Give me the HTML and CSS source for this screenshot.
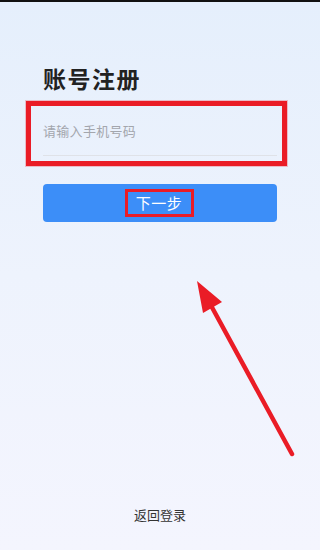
FILE: index.html
```html
<!DOCTYPE html>
<html lang="zh">
<head>
<meta charset="utf-8">
<link rel="stylesheet" href="styles.css">
</head>
<body>
<div class="screen">
  <div class="content">
    <h1 class="title">账号注册</h1>
    <div class="mark-box">
      <div class="field">
        <span class="placeholder">请输入手机号码</span>
      </div>
    </div>
    <div class="btn"><span class="btn-label">下一步</span></div>
  </div>
  <svg class="arrow" width="320" height="550" viewBox="0 0 320 550">
    <line x1="292" y1="454" x2="208" y2="300" stroke="#ea1c26" stroke-width="4.5" stroke-linecap="round"/>
    <polygon points="197,281 203,313 222,302" fill="#ea1c26"/>
  </svg>
  <div class="footer">返回登录</div>
</div>
</body>
</html>
```
FILE: styles.css
```css
html, body {
  margin: 0;
  padding: 0;
}
body {
  font-family: "Noto Sans CJK SC", "Noto Sans", sans-serif;
  width: 320px;
  height: 550px;
  overflow: hidden;
}
.screen {
  position: relative;
  width: 320px;
  height: 550px;
  box-sizing: border-box;
  border-top: 2px solid #111;
  background: linear-gradient(180deg, #e5effc 0%, #eef3fd 50%, #f4f5fe 100%);
  display: flex;
  flex-direction: column;
}
.content {
  padding: 0 33px 0 26px;
  display: flex;
  flex-direction: column;
}
.title {
  margin: 60px 0 0 17px;
  font-size: 23px;
  line-height: 32px;
  font-weight: 700;
  color: #222;
  letter-spacing: 1.5px;
}
.mark-box {
  margin-top: 7px;
  height: 65px;
  box-sizing: border-box;
  border: 5px solid #ea1c26;
  box-shadow: 0 0 0 1px rgba(234, 28, 38, 0.25);
  padding: 0 5px 0 12px;
}
.field {
  height: 50px;
  box-sizing: border-box;
  border-bottom: 1px solid #dfe2e8;
  display: flex;
  align-items: center;
  padding-top: 0px;
}
.placeholder {
  font-size: 13px;
  color: #a3a6ad;
  letter-spacing: 0.3px;
}
.btn {
  margin: 18px 0 0 17px;
  width: 234px;
  height: 38px;
  border-radius: 4px;
  background: #3c8ef8;
  display: flex;
  align-items: center;
  justify-content: center;
}
.btn-label {
  box-sizing: border-box;
  width: 69px;
  height: 28px;
  border: 3px solid #ea1c26;
  color: #fff;
  font-size: 15px;
  line-height: 22px;
  text-align: center;
  letter-spacing: 0.5px;
  margin-left: -2px;
}
.arrow {
  position: absolute;
  left: 0;
  top: -2px;
  pointer-events: none;
}
.footer {
  margin-top: auto;
  margin-bottom: 26px;
  text-align: center;
  font-size: 13px;
  color: #333;
  line-height: 18px;
}
```
